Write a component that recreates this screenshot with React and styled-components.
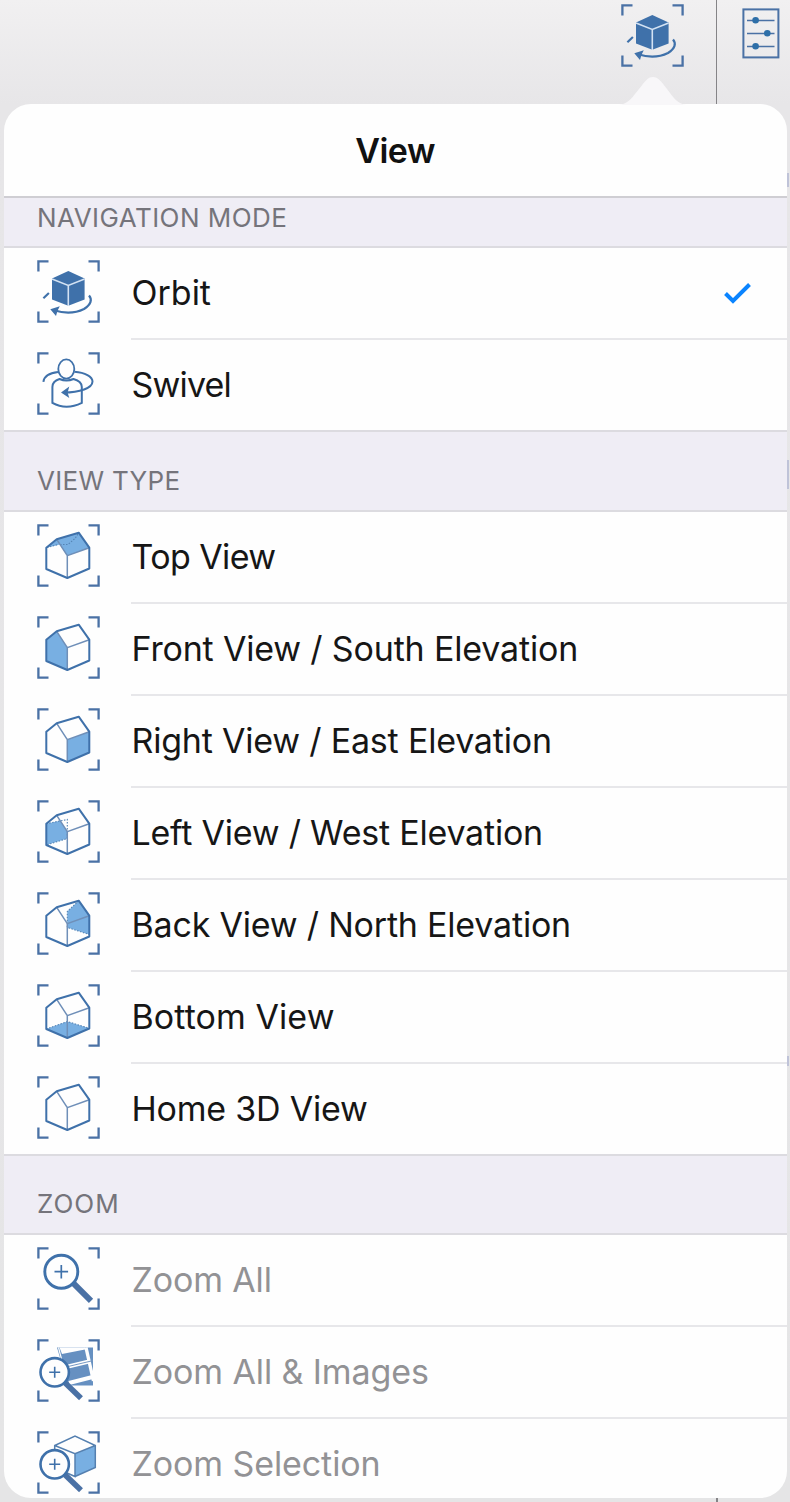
import React from "react";
import styled, { createGlobalStyle } from "styled-components";

const GlobalStyle = createGlobalStyle`
  * { box-sizing: border-box; }
  html, body { margin: 0; padding: 0; }
  body { background: #e5e5e6; font-family: Inter, "Liberation Sans", sans-serif; }
`;

const Page = styled.div`
  display: flex;
  flex-direction: column;
  width: 790px;
  height: 1502px;
  overflow: hidden;
  position: relative;
  background: linear-gradient(#f1f0f1 0, #e7e6e8 104px, #e5e5e6 100%);
`;

const Toolbar = styled.header`
  flex: none;
  display: flex;
  justify-content: flex-end;
  height: 104px;
  padding-right: 10px;
`;

const ToolButton = styled.div`
  position: relative;
  padding-top: 4px;
  width: 64px;
  margin-right: 31px;
`;

const Pointer = styled.svg`
  position: absolute;
  left: -3.5px;
  top: 77px;
  display: block;
`;

const Divider = styled.div`
  width: 1.5px;
  height: ${(p) => p.$height || "100%"};
  background: #858487;
`;

const SettingsButton = styled.div`
  padding: 8px 0 0 25px;
`;

const Popover = styled.main`
  flex: none;
  width: 783px;
  height: 1394px;
  margin-left: 3.6px;
  border-radius: 27px;
  overflow: hidden;
  background: #fefefe;
`;

const Title = styled.h1`
  margin: 0;
  height: 94px;
  border-bottom: 2px solid #cfced3;
  text-align: center;
  font-size: 34px;
  font-weight: 600;
  line-height: 93px;
  letter-spacing: -0.5px;
  color: #111;
`;

const SectionHeader = styled.h2`
  margin: 0;
  display: flex;
  align-items: flex-end;
  height: ${(p) => p.$height}px;
  padding: 0 0 ${(p) => p.$bottom}px 33.4px;
  border-bottom: 2px solid #dcdbe0;
  background: #efedf5;
  font-size: 26px;
  font-weight: 380;
  line-height: 32px;
  letter-spacing: ${(p) => p.$spacing || 0}px;
  color: #75747b;
`;

const Row = styled.div`
  display: flex;
  height: 92px;
  padding-left: 33.4px;
  border-bottom: ${(p) => (p.$last ? "2px solid #dcdbe0" : "0")};
`;

const IconCell = styled.div`
  width: 94px;
  padding-top: 12px;
`;

const RowBody = styled.div`
  flex: 1;
  display: flex;
  align-items: center;
  justify-content: space-between;
  padding: 0 36px 0 0.5px;
  border-bottom: ${(p) => (p.$last ? "0" : "2px solid #e7e7ea")};
`;

const Label = styled.span`
  font-size: 34px;
  font-weight: 380;
  line-height: 44px;
  white-space: nowrap;
  letter-spacing: ${(p) => p.$spacing || 0}px;
  color: ${(p) => (p.$disabled ? "#929295" : "#161616")};
`;

const Svg = styled.svg`
  display: block;
  overflow: visible;
`;

const EdgeMark = styled.i`
  position: absolute;
  right: 1px;
  width: 2px;
  top: ${(p) => p.$top}px;
  height: ${(p) => p.$height}px;
  background: #bfc3d8;
`;

const FooterDivider = styled.div`
  padding-left: 716px;
`;

const INK = "#3f71aa";
const FILL = "#78afe2";

function Framed({ children }) {
  return (
    <Svg width="63" height="63" viewBox="0 0 63 63" fill="none" stroke={INK} strokeWidth="2">
      <path d="M1.4 11.5V1.4H11.5M51.5 1.4H61.6V11.5M61.6 51.5V61.6H51.5M11.5 61.6H1.4V51.5" stroke="#4a71a5" strokeWidth="2.3" />
      {children}
    </Svg>
  );
}

function OrbitIcon() {
  return (
    <Framed>
      <path d="M31.3 11L47.6 18.6V39.6L31.3 45.8L15 39.6V18.6Z" fill={INK} stroke="none" />
      <path d="M15 19L31.3 25.4L47.6 19M31.3 25.4V46" stroke="#d3e2f3" strokeWidth="1.6" />
      <path d="M52 35.5C55.5 39.5 54 44.5 47 49C38 53.5 27 53.5 17 50.3" strokeWidth="2.2" />
      <path d="M13.3 49.2L22.8 46.3L20.5 50.8L19 56Z" fill={INK} stroke="none" />
      <path d="M6.4 38.2L11.9 33" strokeWidth="2.2" />
    </Framed>
  );
}

function SwivelIcon() {
  return (
    <Framed>
      <ellipse cx="29.3" cy="17" rx="8" ry="9.6" strokeWidth="1.8" />
      <path d="M22.5 27C17.5 28.5 15.4 31 15.4 35V50.8C24 55.6 35 55.6 44.8 50.8V35C44.8 31 42 28.5 36.5 27C32 29 27 29 22.5 27Z" />
      <path d="M6.4 29.8C7 24.5 13 21 21 20M37.5 19.7C48 20.5 55.5 24.5 55.5 29.5C55.5 36 43 40.7 26 40.6" />
      <path d="M24 40.6L32.3 34.6L30.6 40.6L32.3 46Z" fill={INK} stroke="none" />
    </Framed>
  );
}

const HOUSE_FILLS = {
  top: "M9.3 23.7L19.7 15.3L41.7 8.7L52.3 23.7L30.3 31.7L23 20.5Z",
  front: "M9.3 23.7L19.7 15.3L30.3 31.7V54L9.3 45Z",
  right: "M30.3 31.7L52.3 23.7V44.3L30.3 54Z",
  left: "M9.3 23.7L23 20.8L30.3 31.7V38.5L9.3 45Z",
  back: "M30.3 19.5L41.7 8.7L52.3 23.7V42.5L30.3 35.5Z",
  bottom: "M9.3 45L30.3 37.5L52.3 44.3L30.3 54Z",
};

const HOUSE_HIDDEN = {
  top: "M10 23.5L21 20.5M23 20.5H31L38 14.5L41 10",
  left: "M9.3 23.7L30.3 19.5V38.5L9.3 45",
  back: "M41.7 8.7L30.3 19.5V35.5L52.3 42.5",
  bottom: "M9.3 45L30.3 37.5L52.3 44.3",
};

function HouseIcon({ side }) {
  return (
    <Framed>
      {HOUSE_FILLS[side] && <path d={HOUSE_FILLS[side]} fill={FILL} stroke="none" />}
      {HOUSE_HIDDEN[side] && (
        <path d={HOUSE_HIDDEN[side]} stroke="#5584b5" strokeWidth="1.1" strokeDasharray="1.5 1.5" />
      )}
      <path d="M19.7 15.3L30.3 31.7L52.3 23.7M30.3 31.7V54" stroke="#6f8fb8" strokeWidth="1.5" />
      <path d="M9.3 23.7L19.7 15.3L41.7 8.7L52.3 23.7V44.5L30.3 54L9.3 45Z" strokeLinejoin="round" />
    </Framed>
  );
}

function Magnifier() {
  return (
    <>
      <path d="M28 43.7L44 59.3" strokeWidth="5.6" stroke="#4a71a5" />
      <circle cx="17.7" cy="33.3" r="14.2" fill="#fefefe" strokeWidth="2.6" />
      <path d="M12.2 33.3H23.2M17.7 27.8V38.8" strokeWidth="1.6" />
    </>
  );
}

function ZoomAllIcon() {
  return (
    <Framed>
      <path d="M36.5 36.3L54 53.8" strokeWidth="6" stroke="#4a71a5" />
      <circle cx="24.3" cy="24.7" r="16.5" fill="#fefefe" strokeWidth="2.9" />
      <path d="M17.5 24.7H31.1M24.3 17.9V31.5" strokeWidth="1.7" />
    </Framed>
  );
}

function ZoomImagesIcon() {
  return (
    <Framed>
      <path d="M20 8.5H56V46.5H30L24 22Z" fill="#6690c1" stroke="none" />
      <path d="M22.5 8.5L25 15L48 10.5V8.5Z" fill="#fefefe" stroke="none" />
      <path d="M27 28.5L52 22.5M32 44L55.5 38" stroke="#fefefe" strokeWidth="4" />
      <path d="M49 8.5L56.5 42" stroke="#fefefe" strokeWidth="3.4" />
      <path d="M29 28L56 21.6" strokeWidth="1" stroke="#7598c3" />
      <path d="M21.5 8.5L25 22" stroke="#fefefe" strokeWidth="1.2" />
      <Magnifier />
    </Framed>
  );
}

function ZoomSelectionIcon() {
  return (
    <Framed>
      <path d="M38 22.8L58.3 14.7V36.5L38 45.7Z" fill={FILL} stroke="none" />
      <path d="M38 45.5L58.3 36.5V14.5L38 5L17.7 14.5V30M17.7 14.5L38 22.8L58.3 14.5M38 22.8V45.5L30 42" strokeWidth="1.5" stroke="#5580b0" />
      <Magnifier />
    </Framed>
  );
}

function SettingsIcon() {
  return (
    <Svg width="38" height="51" viewBox="0 0 38 51" fill="none" stroke="#4a71a5">
      <rect x="1.4" y="1.4" width="35" height="48" strokeWidth="2" />
      <path d="M5 12.5H32.5M5 25.4H32.5M5 38.4H32.5" strokeWidth="1.5" />
      <g fill="#2e6fa8" stroke="none">
        <circle cx="13.6" cy="12.3" r="3.3" />
        <circle cx="25.3" cy="25.3" r="3.3" />
        <circle cx="13.6" cy="38.3" r="3.3" />
      </g>
    </Svg>
  );
}

const SECTIONS = [
  {
    title: "NAVIGATION MODE", height: 50, bottom: 12.5, spacing: 0.45,
    items: [
      { label: "Orbit", icon: <OrbitIcon />, checked: true },
      { label: "Swivel", icon: <SwivelIcon />, spacing: -0.8 },
    ],
  },
  {
    title: "VIEW TYPE", height: 80, bottom: 13, spacing: 0.3,
    items: [
      { label: "Top View", icon: <HouseIcon side="top" />, spacing: -0.6 },
      { label: "Front View / South Elevation", icon: <HouseIcon side="front" />, spacing: -0.17 },
      { label: "Right View / East Elevation", icon: <HouseIcon side="right" />, spacing: -0.2 },
      { label: "Left View / West Elevation", icon: <HouseIcon side="left" />, spacing: -0.22 },
      { label: "Back View / North Elevation", icon: <HouseIcon side="back" />, spacing: -0.2 },
      { label: "Bottom View", icon: <HouseIcon side="bottom" />, spacing: 0.08 },
      { label: "Home 3D View", icon: <HouseIcon />, spacing: -0.2 },
    ],
  },
  {
    title: "ZOOM", height: 79, bottom: 13, spacing: 1,
    items: [
      { label: "Zoom All", icon: <ZoomAllIcon />, disabled: true, spacing: -0.15 },
      { label: "Zoom All & Images", icon: <ZoomImagesIcon />, disabled: true, spacing: -0.1 },
      { label: "Zoom Selection", icon: <ZoomSelectionIcon />, disabled: true, spacing: -0.1 },
    ],
  },
];

export default function App() {
  return (
    <>
      <GlobalStyle />
      <Page>
        <Toolbar>
          <ToolButton>
            <OrbitIcon />
            <Pointer width="72" height="28" viewBox="0 0 72 28">
              <path d="M2 28C12 27 16 19 22 12C29 3 31 0 36 0C41 0 44 4 50 12C57 21 60 27 70 28Z" fill="#f8f7f9" />
            </Pointer>
          </ToolButton>
          <Divider />
          <SettingsButton><SettingsIcon /></SettingsButton>
        </Toolbar>
        <Popover>
          <Title>View</Title>
          {SECTIONS.map((s) => (
            <section key={s.title}>
              <SectionHeader $height={s.height} $bottom={s.bottom} $spacing={s.spacing}>{s.title}</SectionHeader>
              {s.items.map((it, i) => {
                const last = i === s.items.length - 1;
                return (
                  <Row key={it.label} $last={last}>
                    <IconCell>{it.icon}</IconCell>
                    <RowBody $last={last}>
                      <Label $disabled={it.disabled} $spacing={it.spacing}>{it.label}</Label>
                      {it.checked && (
                        <Svg width="27" height="22" viewBox="0 0 27 22" fill="none" stroke="#0a84ff" strokeWidth="4">
                          <path d="M1.5 11.5L9 19L25.5 2.5" />
                        </Svg>
                      )}
                    </RowBody>
                  </Row>
                );
              })}
            </section>
          ))}
        </Popover>
        <FooterDivider><Divider $height="4px" /></FooterDivider>
        <EdgeMark $top={173} $height={14} />
        <EdgeMark $top={460} $height={29} />
        <EdgeMark $top={1056} $height={10} />
      </Page>
    </>
  );
}
